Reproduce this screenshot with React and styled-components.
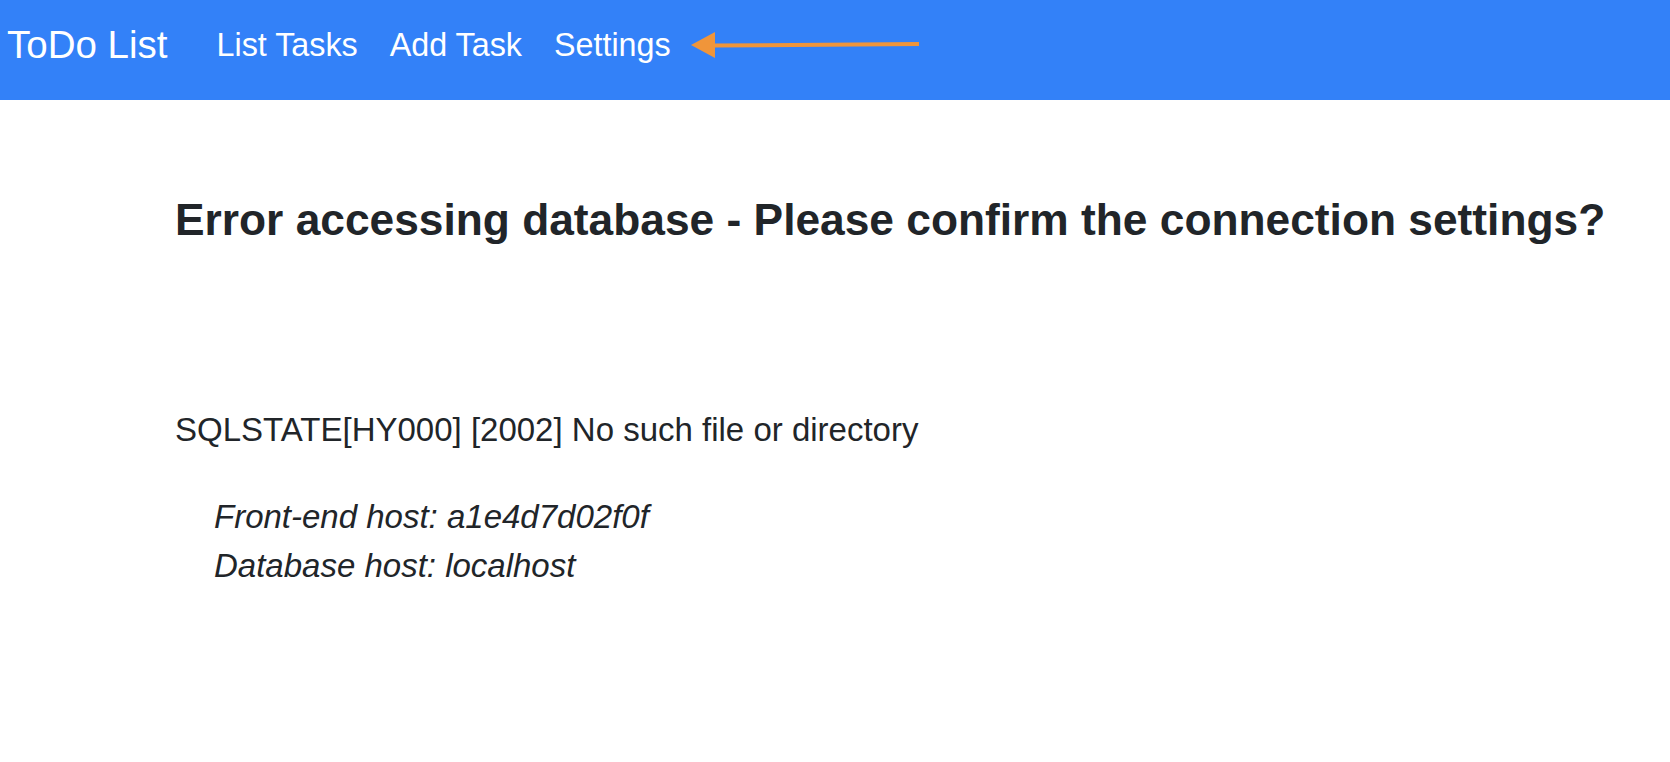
import React from 'react'
import styled, { createGlobalStyle } from 'styled-components'

const GlobalStyle = createGlobalStyle`
  body {
    margin: 0;
    background: #fff;
    color: #212529;
    font-family: "Liberation Sans", Arial, sans-serif;
  }
`

const NavBar = styled.nav`
  height: 100px;
  background: #3381f8;
  display: flex;
  align-items: center;
  padding: 0 0 10px 7px;
  box-sizing: border-box;
`

const Brand = styled.a`
  color: #fff;
  font-size: 38.5px;
  margin-right: 49px;
  text-decoration: none;
`

const NavLinks = styled.div`
  display: flex;
  gap: 32px;
  align-items: center;
`

const NavLink = styled.a`
  color: #fff;
  font-size: 32.3px;
  text-decoration: none;
`

const Arrow = styled.svg`
  margin-left: 20px;
  display: block;
`

const Main = styled.main`
  padding: 0 0 0 175px;
`

const Heading = styled.h1`
  font-size: 44.3px;
  font-weight: 700;
  margin: 93px 0 0;
  line-height: 1.2;
`

const ErrorText = styled.p`
  font-size: 33px;
  margin: 164px 0 0;
  line-height: 1.2;
`

const HostList = styled.div`
  margin: 42px 0 0 39px;
  font-style: italic;
  font-size: 33px;
  line-height: 49px;
`

export default function App() {
  return (
    <>
      <GlobalStyle />
      <NavBar>
        <Brand href="#">ToDo List</Brand>
        <NavLinks>
          <NavLink href="#">List Tasks</NavLink>
          <NavLink href="#">Add Task</NavLink>
          <NavLink href="#">Settings</NavLink>
        </NavLinks>
        <Arrow width="230" height="30" viewBox="0 0 230 30">
          <path d="M22 15.5 L228 14" stroke="#f0953a" strokeWidth="4" fill="none" />
          <path d="M0 15 L24 2 L24 28 Z" fill="#f0953a" />
        </Arrow>
      </NavBar>
      <Main>
        <Heading>Error accessing database - Please confirm the connection settings?</Heading>
        <ErrorText>SQLSTATE[HY000] [2002] No such file or directory</ErrorText>
        <HostList>
          <div>Front-end host: a1e4d7d02f0f</div>
          <div>Database host: localhost</div>
        </HostList>
      </Main>
    </>
  )
}
